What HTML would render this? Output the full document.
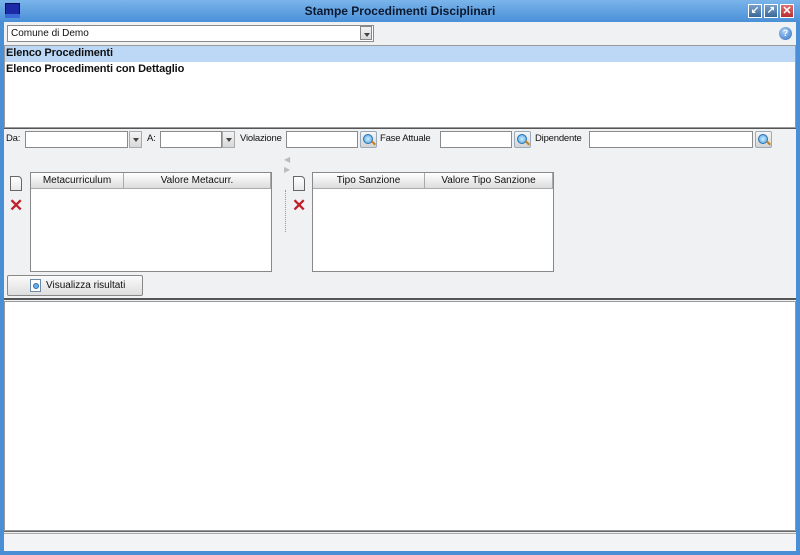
<!DOCTYPE html>
<html><head><meta charset="utf-8"><style>
*{box-sizing:border-box;margin:0;padding:0}
body{width:800px;height:555px;overflow:hidden;background:#4a8fd6;font-family:"Liberation Sans",sans-serif;font-size:11px;color:#111;position:relative}
.a{position:absolute}
.inp{position:absolute;background:#fff;border:1px solid #8a8a8a;height:17px}
.dd{position:absolute;width:13px;height:17px;background:linear-gradient(#f4f4f4,#d8d8d8);border:1px solid #aaa}
.dd:after{content:"";position:absolute;left:3px;top:6px;border:3px solid transparent;border-top:4px solid #444}
.mag{position:absolute;width:17px;height:17px;border:1px solid #9ab;border-radius:2px;background:linear-gradient(#f6f6f6,#d4d4d4)}
.mag:before{content:"";position:absolute;left:2px;top:2px;width:8px;height:8px;border-radius:50%;background:radial-gradient(#cfefff,#4aa0e0);border:1px solid #2870b0}
.mag:after{content:"";position:absolute;left:10px;top:10px;width:5px;height:2px;background:#c08020;transform:rotate(45deg)}
.lbl{position:absolute;top:133px;font-size:9.5px;letter-spacing:-0.2px}
.grid{position:absolute;background:#fff;border:1px solid #888}
.gh{position:absolute;top:0;height:16px;background:linear-gradient(#fff,#dcdcdc);border-right:1px solid #aaa;border-bottom:1px solid #aaa;text-align:center;font-size:10px;line-height:15px}
.doc{position:absolute;width:12px;height:15px;background:linear-gradient(#fff,#e8e8e8);border:1px solid #666;border-radius:0 4px 0 0}
.x{position:absolute;color:#c0202a;font-weight:bold;font-size:17px;line-height:14px}
</style></head><body>
<div class="a" style="left:0;top:0;width:800px;height:22px;background:linear-gradient(#7ab4ea,#4a90d8)"></div>
<div class="a" style="left:5px;top:3px;width:15px;height:15px;background:#1c2aa8;border:1px solid #0a1060"></div>
<div class="a" style="left:5px;top:14px;width:15px;height:4px;background:#3a6ad8"></div>
<div class="a" style="left:0;top:4px;width:800px;text-align:center;font-weight:bold;font-size:12px;color:#0a1830">Stampe Procedimenti Disciplinari</div>
<div class="a" style="left:748px;top:4px;width:14px;height:14px;background:linear-gradient(#7aa0c8,#3a6898);border:1px solid #fff;color:#fff;font-size:10px;line-height:12px;text-align:center;font-weight:bold">↙</div>
<div class="a" style="left:764px;top:4px;width:14px;height:14px;background:linear-gradient(#7aa0c8,#3a6898);border:1px solid #fff;color:#fff;font-size:10px;line-height:12px;text-align:center;font-weight:bold">↗</div>
<div class="a" style="left:780px;top:4px;width:14px;height:14px;background:linear-gradient(#e07070,#b83030);border:1px solid #fff;color:#fff;font-size:11px;line-height:12px;text-align:center;font-weight:bold">✕</div>
<div class="a" style="left:4px;top:22px;width:792px;height:529px;background:#f0f1f3"></div>
<div class="inp" style="left:7px;top:25px;width:367px;height:17px;font-size:10px;padding:2px 3px">Comune di Demo</div>
<div class="dd" style="left:360px;top:26px;width:12px;height:14px;border-color:#888"></div>
<div class="a" style="left:779px;top:27px;width:13px;height:13px;border-radius:50%;background:radial-gradient(circle at 40% 35%,#a8d0f8,#2e6cc0);color:#fff;font-size:9px;text-align:center;line-height:13px;font-weight:bold">?</div>
<div class="a" style="left:4px;top:45px;width:792px;height:83px;background:#fff;border:1px solid #9a9a9a"></div>
<div class="a" style="left:5px;top:46px;width:790px;height:16px;background:#bcd8f6"></div>
<div class="a" style="left:6px;top:47px;font-weight:bold;font-size:11px;letter-spacing:-0.1px">Elenco Procedimenti</div>
<div class="a" style="left:6px;top:63px;font-weight:bold;font-size:11px;letter-spacing:-0.1px">Elenco Procedimenti con Dettaglio</div>
<div class="a" style="left:4px;top:128px;width:792px;height:172px;border:1px solid #555;border-width:1px 0 2px 0"></div>
<div class="lbl" style="left:6px">Da:</div>
<div class="inp" style="left:25px;top:131px;width:103px"></div>
<div class="dd" style="left:129px;top:131px"></div>
<div class="lbl" style="left:147px">A:</div>
<div class="inp" style="left:160px;top:131px;width:62px"></div>
<div class="dd" style="left:222px;top:131px"></div>
<div class="lbl" style="left:240px">Violazione</div>
<div class="inp" style="left:286px;top:131px;width:72px"></div>
<div class="mag" style="left:360px;top:131px"></div>
<div class="lbl" style="left:380px">Fase Attuale</div>
<div class="inp" style="left:440px;top:131px;width:72px"></div>
<div class="mag" style="left:514px;top:131px"></div>
<div class="lbl" style="left:535px">Dipendente</div>
<div class="inp" style="left:589px;top:131px;width:164px"></div>
<div class="mag" style="left:755px;top:131px"></div>
<div class="doc" style="left:10px;top:176px"></div>
<div class="x" style="left:9px;top:199px">✕</div>
<div class="grid" style="left:30px;top:172px;width:242px;height:100px">
<div class="gh" style="left:0;width:93px">Metacurriculum</div>
<div class="gh" style="left:93px;width:147px">Valore Metacurr.</div></div>
<div class="a" style="left:284px;top:155px;color:#bbb;font-size:8px">◀</div>
<div class="a" style="left:284px;top:165px;color:#bbb;font-size:8px">▶</div>
<div class="a" style="left:285px;top:190px;height:42px;border-left:1px dotted #999"></div>
<div class="doc" style="left:293px;top:176px"></div>
<div class="x" style="left:292px;top:199px">✕</div>
<div class="grid" style="left:312px;top:172px;width:242px;height:100px">
<div class="gh" style="left:0;width:112px">Tipo Sanzione</div>
<div class="gh" style="left:112px;width:128px">Valore Tipo Sanzione</div></div>
<div class="a" style="left:7px;top:275px;width:136px;height:21px;border:1px solid #888;border-radius:2px;background:linear-gradient(#fafafa,#dedede);font-size:10px;line-height:19px;padding-left:38px">Visualizza risultati</div>
<div class="a" style="left:30px;top:279px;width:11px;height:13px;background:#fff;border:1px solid #6a8aa8"></div>
<div class="a" style="left:33px;top:283px;width:6px;height:6px;border-radius:50%;background:#6ab0e8;border:1px solid #2870b0"></div>
<div class="a" style="left:4px;top:301px;width:792px;height:230px;background:#fff;border:1px solid #999"></div>
<div class="a" style="left:4px;top:531px;width:792px;height:3px;border-top:1px solid #666;border-bottom:1px solid #aaa"></div>
<div class="a" style="left:4px;top:534px;width:792px;height:17px;background:#f3f4f6"></div>
</body></html>
